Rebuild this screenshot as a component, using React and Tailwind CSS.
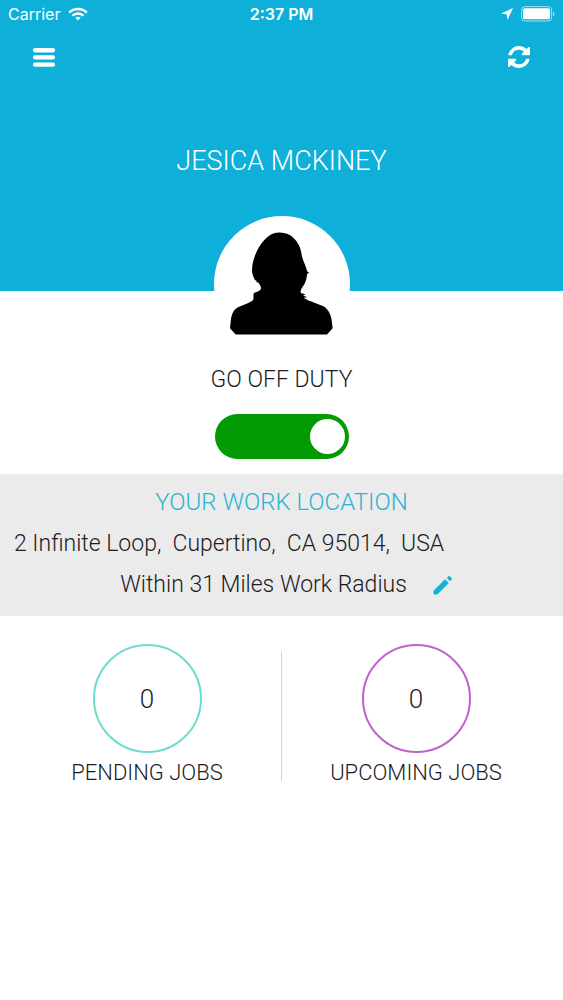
import { useState } from "react";

function WifiIcon() {
  return (
    <svg viewBox="0 0 20 14" className="h-[14px] w-5" fill="none" stroke="white" strokeWidth="2.3" aria-hidden="true">
      <path d="M1.2 5.6C6 .8 14 .8 18.800 5.600" />
      <path d="M4.400 8.800C7.500 5.700 12.500 5.700 15.600 8.800" />
      <path d="M10 13.600L7.200 10.800Q10 8.600 12.800 10.800Z" fill="white" stroke="none" />
    </svg>
  );
}

function LocationIcon() {
  return (
    <svg viewBox="0 0 12 12" className="size-3" fill="white" aria-hidden="true">
      <path d="M12 0L0 5.600L5.600 6.300L6.500 12Z" />
    </svg>
  );
}

function BatteryIcon() {
  return (
    <svg viewBox="0 0 36 16" className="h-4 w-9" aria-hidden="true">
      <rect x="2.600" y="0.600" width="30" height="14.400" rx="3.500" fill="none" stroke="white" strokeOpacity="0.6" />
      <rect x="4" y="2.300" width="27" height="11" rx="1.800" fill="white" />
      <path d="M34 5.500Q35.500 6.300 35.500 8T34 10.500Z" fill="white" fillOpacity="0.6" />
    </svg>
  );
}

function MenuIcon() {
  return (
    <svg viewBox="0 0 22 19" className="h-[19px] w-[22px]" fill="white" aria-hidden="true">
      <rect width="22" height="4.400" rx="1.800" />
      <rect y="7.200" width="22" height="4.400" rx="1.800" />
      <rect y="14.400" width="22" height="4.400" rx="1.800" />
    </svg>
  );
}

function RefreshIcon() {
  return (
    <svg viewBox="0 0 1536 1536" className="size-[22px]" fill="white" aria-hidden="true">
      <path d="M1511 928q0 5-1 7-64 268-268 434.500T764 1536q-146 0-282.500-55T238 1324l-129 129q-19 19-45 19t-45-19-19-45V960q0-26 19-45t45-19h448q26 0 45 19t19 45-19 45l-137 137q71 66 161 102t187 36q134 0 250-65t186-179q11-17 53-117 8-23 30-23h192q13 0 22.500 9.500t9.500 22.500zm25-800v448q0 26-19 45t-45 19h-448q-26 0-45-19t-19-45 19-45l138-138Q969 256 768 256q-134 0-250 65T332 500q-11 17-53 117-8 23-30 23H50q-13 0-22.500-9.500T18 608v-7q65-268 270-434.500T768 0q146 0 284 55.500T1297 212l130-129q19-19 45-19t45 19 19 45z" />
    </svg>
  );
}

function PencilIcon() {
  return (
    <svg viewBox="0 0 24 24" className="size-6" fill="currentColor" stroke="currentColor" strokeLinejoin="round" aria-hidden="true">
      <path strokeWidth="1" d="M3 17.700V21H6.300L17.300 10L14 6.700Z" />
      <path strokeWidth="2" d="M17.200 4.900L18.100 4L20 5.900L19.100 6.800Z" />
    </svg>
  );
}

function Silhouette() {
  return (
    <svg viewBox="90 82 310 309" className="h-[103px] w-[103px]" role="img" aria-label="Profile picture">
      <path d="M238 83C225 83 216 87 206 94C188 107 174 129 165 153C158 172 155 190 157 205C159 215 163 221 166 228L168 225L171 234L174 232C179 240 184 244 183 252C180 261 167 261 162 266C159 272 162 278 160 285C158 290 152 292 145 295L114 308C101 315 96 327 93 343L90 371L107 390H382L399 371L396 346C393 328 385 313 371 305L333 290C323 286 317 283 312 280L322 277L310 273L317 269L303 265C301 256 307 248 313 240C319 230 321 219 322 208L328 204L322 200C320 186 310 170 307 156C304 143 303 132 297 121C289 105 277 93 262 87L247 84Z" />
    </svg>
  );
}

function JobCount({ label, count, ring }) {
  return (
    <a href="#" className="flex flex-1 flex-col items-center">
      <span className={`flex size-[109px] items-center justify-center rounded-full border-2 text-[26px] leading-8 ${ring}`}>
        {count}
      </span>
      <span className="mt-1 text-[22px] leading-8">{label}</span>
    </a>
  );
}

export default function App() {
  const [onDuty, setOnDuty] = useState(true);

  return (
    <div className="min-h-screen bg-white font-['Roboto',sans-serif] font-light text-[#1c1c1e]">
      <header className="bg-[#0eb0da] pb-28 text-white">
        <div className="grid grid-cols-3 items-center px-2 font-['Inter',sans-serif] text-base leading-7">
          <div className="flex items-center gap-2 font-normal">
            Carrier
            <WifiIcon />
          </div>
          <time className="text-center font-semibold">2:37 PM</time>
          <div className="flex items-center justify-end gap-1.5">
            <LocationIcon />
            <BatteryIcon />
          </div>
        </div>
        <nav className="flex h-[58px] items-center justify-between px-[33px]">
          <button type="button" aria-label="Menu">
            <MenuIcon />
          </button>
          <button type="button" aria-label="Refresh">
            <RefreshIcon />
          </button>
        </nav>
        <h1 className="pt-[57px] text-center text-[27px] leading-9">JESICA MCKINEY</h1>
      </header>

      <main className="flex flex-col">
        <div className="-mt-[75px] flex size-[136px] items-start justify-center self-center rounded-full bg-white pt-4">
          <Silhouette />
        </div>

        <label htmlFor="duty" className="mt-3 text-center text-[23px] leading-8">
          GO OFF DUTY
        </label>
        <input
          id="duty"
          type="checkbox"
          role="switch"
          checked={onDuty}
          onChange={(e) => setOnDuty(e.target.checked)}
          className="mt-[18px] flex h-[45px] w-[134px] cursor-pointer appearance-none items-center self-center rounded-full bg-gray-400 px-1 before:size-[35px] before:rounded-full before:bg-white checked:justify-end checked:bg-[#039a03]"
        />

        <section className="mt-[15px] bg-[#ebebec] px-[14px] pt-2 pb-[11px] text-[23px] leading-[41px]">
          <h2 className="text-center text-2xl leading-[41px] text-[#2bb3d1]">YOUR WORK LOCATION</h2>
          <p className="whitespace-pre-wrap">2 Infinite Loop,  Cupertino,  CA 95014,  USA</p>
          <div className="flex items-center justify-center gap-6 pl-3">
            <p>Within 31 Miles Work Radius</p>
            <button type="button" aria-label="Edit work radius" className="text-[#12b0d4]">
              <PencilIcon />
            </button>
          </div>
        </section>

        <section className="flex px-[13px] pt-7">
          <JobCount label="PENDING JOBS" count={0} ring="border-[#6cdccf]" />
          <div className="mt-2 mb-2 w-px bg-[#d5d0dc]" />
          <JobCount label="UPCOMING JOBS" count={0} ring="border-[#bf62cc]" />
        </section>
      </main>
    </div>
  );
}
